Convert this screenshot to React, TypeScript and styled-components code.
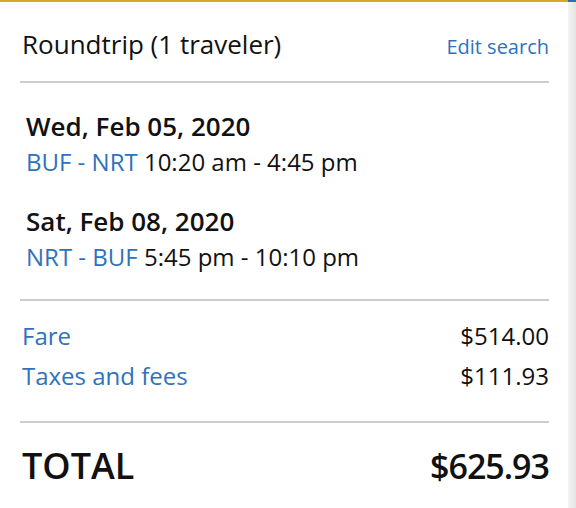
import React from "react";
import styled, { createGlobalStyle } from "styled-components";

const Global = createGlobalStyle`
  html, body {
    margin: 0;
    padding: 0;
    background: #fff;
  }
  body {
    font-family: "Open Sans", "Liberation Sans", sans-serif;
    color: #111;
  }
`;

const Page = styled.div`
  display: flex;
  width: 576px;
  height: 508px;
  overflow: hidden;
`;

const Panel = styled.div`
  flex: 1;
  border-top: 2px solid #d9a62e;
  padding: 0 19px 0 20px;
`;

const ScrollStrip = styled.div`
  width: 8px;
  border-top: 2px solid #2f6db5;
  background: linear-gradient(to right, #f4f4f4, #e4e4e4);
`;

const Header = styled.div`
  display: flex;
  justify-content: space-between;
  align-items: baseline;
  padding: 24px 0 16px 2px;
  line-height: 36px;
`;

const Title = styled.div`
  font-size: 26px;
`;

const Link = styled.a`
  color: #2e72bd;
  text-decoration: none;
  font-size: 20px;
`;

const Divider = styled.hr`
  border: none;
  border-top: 2px solid #cdcdcd;
  margin: 0;
`;

const Trips = styled.div`
  padding: 25px 0 24px 6px;
  display: flex;
  flex-direction: column;
  gap: 23px;
`;

const Leg = styled.div`
  display: flex;
  flex-direction: column;
  line-height: 36px;
`;

const LegDate = styled.div`
  font-size: 26px;
  font-weight: 600;
`;

const LegTimes = styled.div`
  font-size: 24px;
`;

const Route = styled.span`
  color: #2e72bd;
`;

const Charges = styled.div`
  padding: 17px 0 27px 2px;
  display: flex;
  flex-direction: column;
  gap: 4px;
`;

const ChargeRow = styled.div`
  display: flex;
  justify-content: space-between;
  font-size: 24px;
  line-height: 36px;
`;

const ChargeLabel = styled.span`
  color: #2e72bd;
`;

const TotalRow = styled.div`
  display: flex;
  justify-content: space-between;
  align-items: baseline;
  padding: 21px 0 0 2px;
  font-size: 36px;
  line-height: 44px;
  font-weight: 600;
`;

const TotalAmount = styled.span`
  font-size: 34px;
  letter-spacing: -1px;
`;

const legs = [
  { date: "Wed, Feb 05, 2020", route: "BUF - NRT", times: "10:20 am - 4:45 pm" },
  { date: "Sat, Feb 08, 2020", route: "NRT - BUF", times: "5:45 pm - 10:10 pm" },
];

const charges = [
  { label: "Fare", amount: "$514.00" },
  { label: "Taxes and fees", amount: "$111.93" },
];

export default function App() {
  return (
    <>
      <Global />
      <Page>
        <Panel>
          <Header>
            <Title>Roundtrip (1 traveler)</Title>
            <Link href="#">Edit search</Link>
          </Header>
          <Divider />
          <Trips>
            {legs.map((leg) => (
              <Leg key={leg.date}>
                <LegDate>{leg.date}</LegDate>
                <LegTimes>
                  <Route>{leg.route}</Route> {leg.times}
                </LegTimes>
              </Leg>
            ))}
          </Trips>
          <Divider />
          <Charges>
            {charges.map((c) => (
              <ChargeRow key={c.label}>
                <ChargeLabel>{c.label}</ChargeLabel>
                <span>{c.amount}</span>
              </ChargeRow>
            ))}
          </Charges>
          <Divider />
          <TotalRow>
            <span>TOTAL</span>
            <TotalAmount>$625.93</TotalAmount>
          </TotalRow>
        </Panel>
        <ScrollStrip />
      </Page>
    </>
  );
}
